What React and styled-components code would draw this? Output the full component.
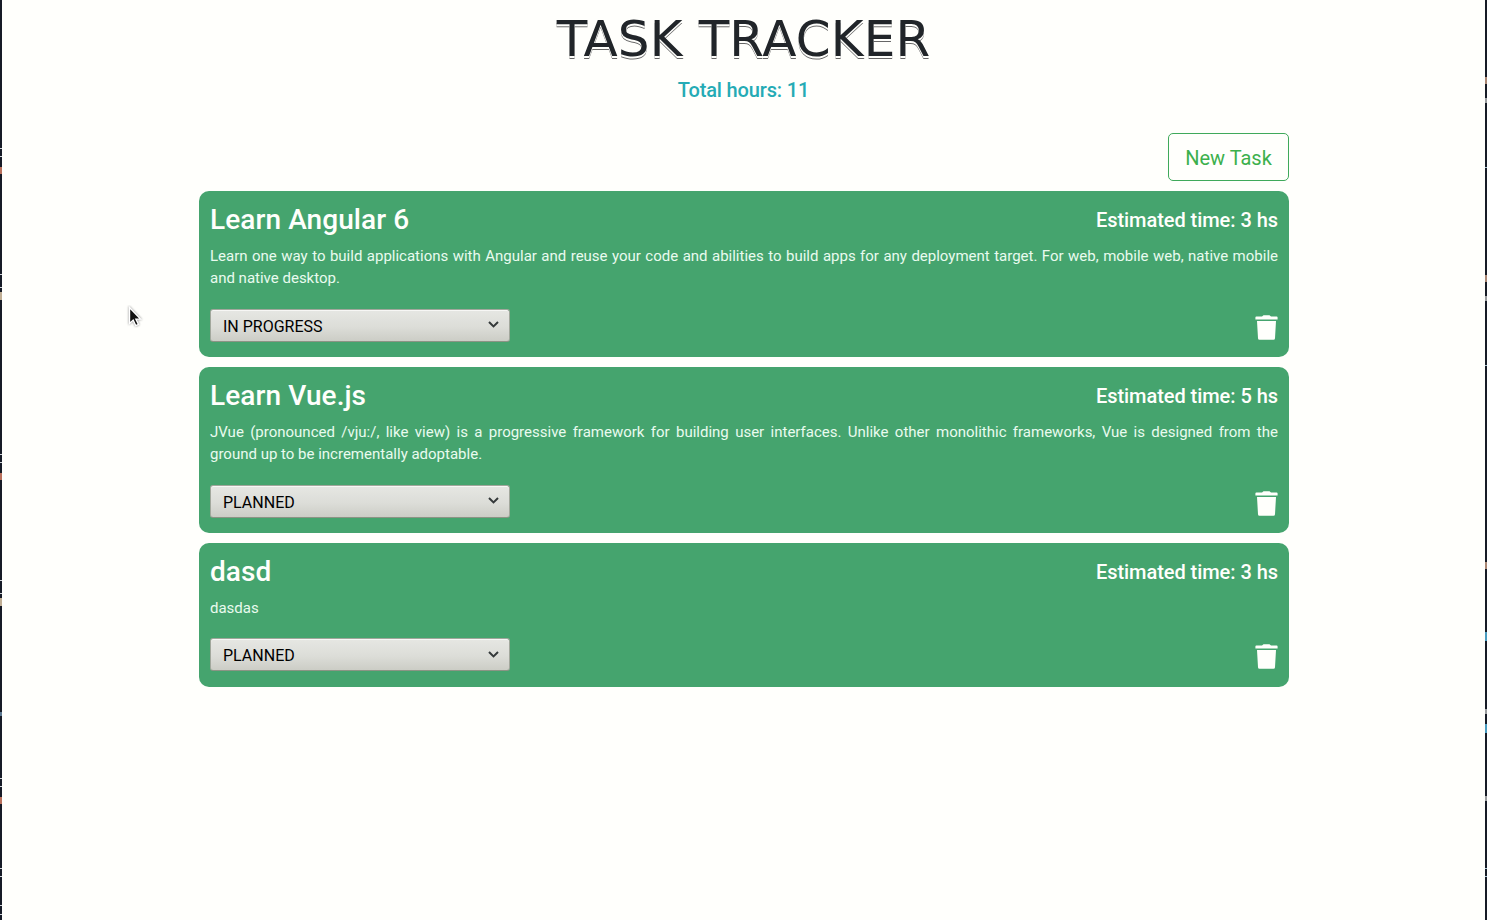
import React from "react";
import styled, { createGlobalStyle } from "styled-components";

const GlobalStyle = createGlobalStyle`
  * { box-sizing: border-box; }
  body { margin: 0; background: #fffffc; font-family: Roboto, "Liberation Sans", sans-serif; }
  h1, h2, h3, p { margin: 0; }
`;

const Page = styled.div`
  position: relative;
  height: 920px;
  background: #fffffc;
  border: solid #161b26;
  border-width: 0 2px;
`;

const Title = styled.h1`
  padding-top: 10px;
  text-align: center;
  font: 400 50px/58px "DejaVu Sans", sans-serif;
  letter-spacing: 0.15px;
  color: #212529;
  text-shadow: 0 2px 0 #fffffc, 0 3px 0 #666;
`;

const Total = styled.h3`
  margin-top: 10px;
  text-align: center;
  font-size: 20px;
  line-height: 24px;
  font-weight: 500;
  letter-spacing: -0.14px;
  color: #25abb5;
`;

const Content = styled.main`
  display: flex;
  flex-direction: column;
  gap: 10px;
  width: 1090px;
  margin: 31px 0 0 197px;
`;

const NewTask = styled.button`
  align-self: flex-end;
  width: 121px;
  height: 48px;
  padding: 2px 0 0;
  border: 1px solid #3fa95b;
  border-radius: 5px;
  background: transparent;
  color: #3cb04c;
  font: 400 20px/30px Roboto, sans-serif;
`;

const Card = styled.article`
  padding: 11px 11px 15.2px;
  border-radius: 10px;
  background: #45a46e;
  color: #fffffc;
`;

const CardHeader = styled.header`
  display: flex;
  justify-content: space-between;
  align-items: center;
  height: 34px;
`;

const TaskName = styled.h2`
  padding-top: 2px;
  font-size: 28px;
  line-height: 34px;
  font-weight: 500;
  letter-spacing: 0.08px;
`;

const Estimate = styled.h3`
  padding-top: 2px;
  font-size: 20px;
  line-height: 24px;
  font-weight: 500;
  letter-spacing: -0.05px;
`;

const Description = styled.p`
  margin-top: 9px;
  font-size: 15px;
  line-height: 22.4px;
  text-align: justify;
  color: #e9fbef;
`;

const CardFooter = styled.footer`
  display: flex;
  justify-content: space-between;
  align-items: flex-start;
  margin-top: 19px;
  height: 33px;
`;

const StatusSelect = styled.button`
  display: flex;
  align-items: center;
  justify-content: space-between;
  width: 300px;
  height: 33px;
  padding: 3px 11px 0 12px;
  border: 1px solid #a1a79c;
  border-bottom-color: #8c9485;
  border-radius: 3px;
  background: linear-gradient(#e6e7e3, #dcddd8 55%, #cccdc6);
  box-shadow: inset 0 1px #f7f7f5;
  color: #000;
  font: 400 16px/24px Roboto, sans-serif;
`;

const Chevron = styled.svg`
  display: block;
  margin: -4px -0.5px 0 0;
`;

const DeleteButton = styled.button`
  display: flex;
  padding: 0;
  margin-top: 6px;
  border: 0;
  background: transparent;
`;

const Cursor = styled.svg`
  position: absolute;
  left: 124px;
  top: 305px;
`;

const Fleck = styled.i`
  position: absolute;
  top: ${(p) => p.$y}px;
  ${(p) => p.$side}: -2px;
  width: 2px;
  height: ${(p) => p.$h}px;
  background: ${(p) => p.$color};
`;

const flecks = [
  ...[148, 156, 274, 287, 454, 462, 580, 593, 778, 786, 868, 876, 905, 914].map((y) => ["left", y, 1, "#cfd3d8"]),
  ...[167, 473, 797].map((y) => ["left", y, 7, "#b9705c"]),
  ...[292, 598].map((y) => ["left", y, 8, "#c0ae94"]),
  ["left", 712, 4, "#5b7890"],
  ...[77, 275, 562].map((y) => ["right", y, 7, "#a98673"]),
  ...[98, 296, 709, 796].map((y) => ["right", y, 5, "#9a9c9e"]),
  ...[167, 365, 868, 876].map((y) => ["right", y, 1, "#aac5d4"]),
  ...[632, 724].map((y) => ["right", y, 9, "#4a9cc0"]),
];

const tasks = [
  {
    name: "Learn Angular 6",
    hours: 3,
    status: "IN PROGRESS",
    text: "Learn one way to build applications with Angular and reuse your code and abilities to build apps for any deployment target. For web, mobile web, native mobile and native desktop.",
  },
  {
    name: "Learn Vue.js",
    hours: 5,
    status: "PLANNED",
    text: "JVue (pronounced /vju:/, like view) is a progressive framework for building user interfaces. Unlike other monolithic frameworks, Vue is designed from the ground\u00a0up to be incrementally adoptable.",
  },
  { name: "dasd", hours: 3, status: "PLANNED", text: "dasdas" },
];

function TaskCard({ task }) {
  return (
    <Card>
      <CardHeader>
        <TaskName>{task.name}</TaskName>
        <Estimate>Estimated time: {task.hours} hs</Estimate>
      </CardHeader>
      <Description>{task.text}</Description>
      <CardFooter>
        <StatusSelect>
          {task.status}
          <Chevron width="11" height="7" viewBox="0 0 11 7">
            <path d="M1 1l4.5 4.4L10 1" fill="none" stroke="#34393a" strokeWidth="2" />
          </Chevron>
        </StatusSelect>
        <DeleteButton aria-label="Delete task">
          <svg width="23" height="26" viewBox="0 0 23 26">
            <path
              fill="#fffffc"
              d="M1.4 1.4H7L8.5.2h6L16 1.4h5.6a1 1 0 0 1 1 1v2.2H.4V2.4a1 1 0 0 1 1-1zM2 6h19l-1 17.2a1.6 1.6 0 0 1-1.6 1.6H4.6A1.6 1.6 0 0 1 3 23.2z"
            />
          </svg>
        </DeleteButton>
      </CardFooter>
    </Card>
  );
}

export default function App() {
  return (
    <Page>
      <GlobalStyle />
      <Title>TASK TRACKER</Title>
      <Total>Total hours: 11</Total>
      <Content>
        <NewTask>New Task</NewTask>
        {tasks.map((task) => (
          <TaskCard key={task.name} task={task} />
        ))}
      </Content>
      {flecks.map(([side, y, h, color]) => (
        <Fleck key={side + y} $side={side} $y={y} $h={h} $color={color} />
      ))}
      <Cursor width="18" height="24" viewBox="0 0 18 24">
        <path
          d="M3.5 2.5v16l3.7-3.4 2.6 5.6 2.7-1.2-2.6-5.4h4.6z"
          fill="#111"
          stroke="#fff"
          strokeWidth="1.4"
          style={{ filter: "drop-shadow(0 0 1px #888)" }}
        />
      </Cursor>
    </Page>
  );
}
